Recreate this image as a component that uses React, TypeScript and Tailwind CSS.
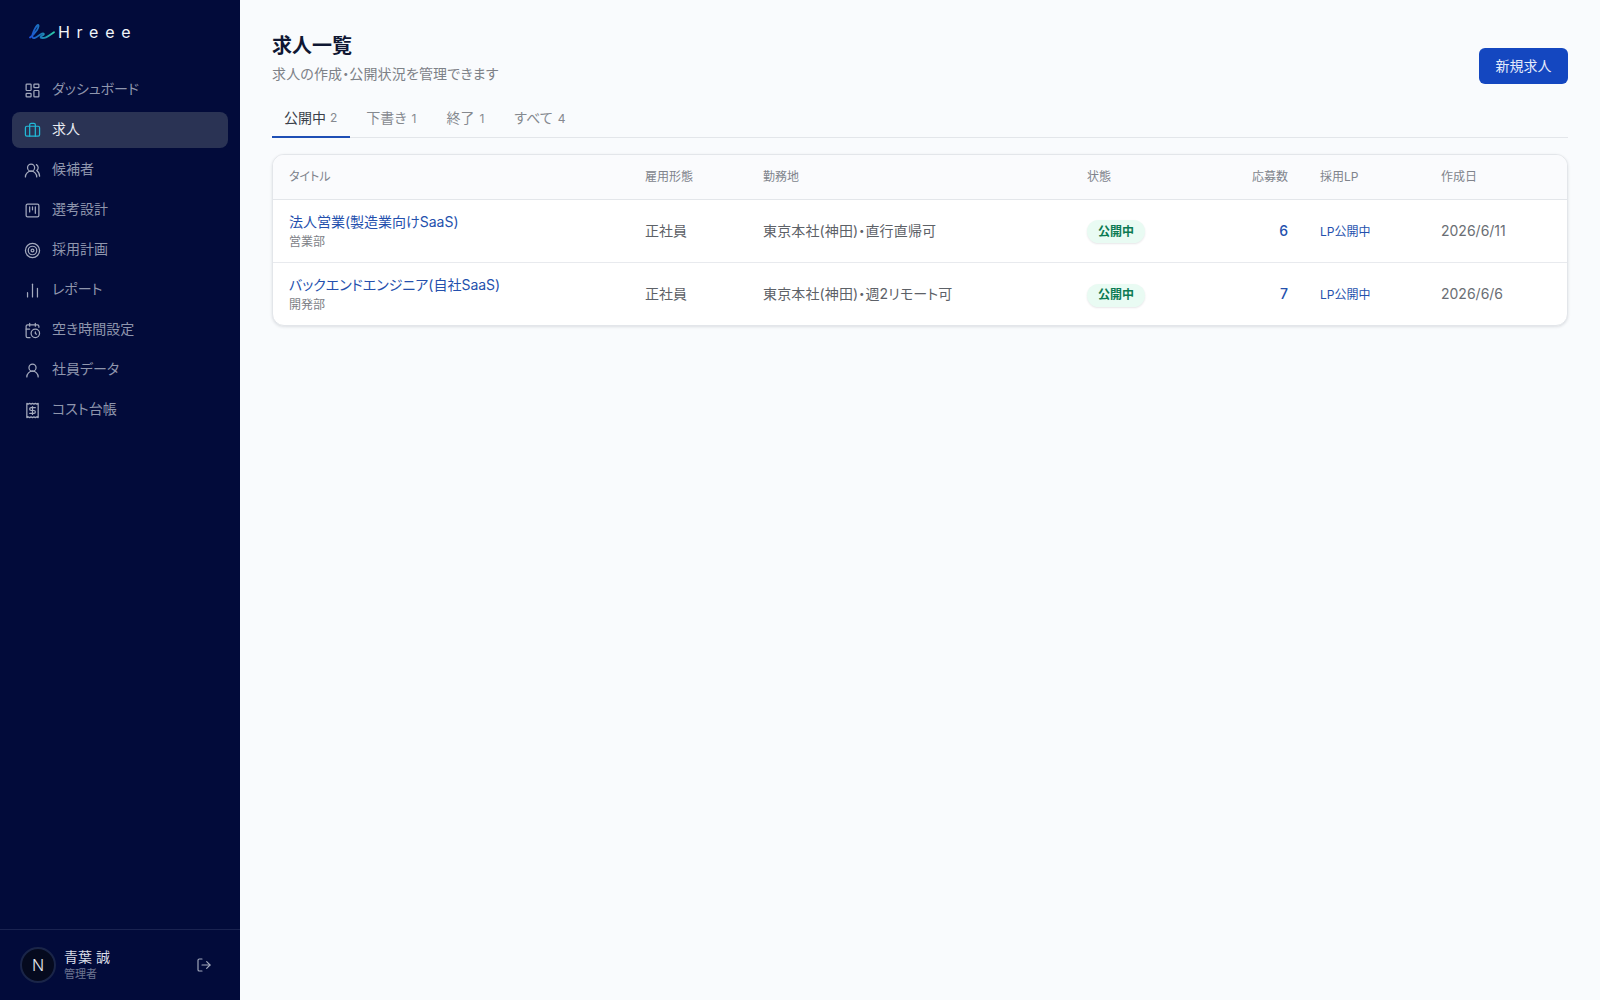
import {
  Briefcase,
  CalendarClock,
  ChartNoAxesColumn,
  LayoutDashboard,
  LogOut,
  Receipt,
  SquareKanban,
  Target,
  UserRound,
  UsersRound,
} from "lucide-react";

const FONT = "font-['Inter','Noto_Sans_CJK_JP',sans-serif] [font-feature-settings:'palt']";

const navItems = [
  { label: "ダッシュボード", icon: LayoutDashboard },
  { label: "求人", icon: Briefcase, active: true },
  { label: "候補者", icon: UsersRound },
  { label: "選考設計", icon: SquareKanban },
  { label: "採用計画", icon: Target },
  { label: "レポート", icon: ChartNoAxesColumn },
  { label: "空き時間設定", icon: CalendarClock },
  { label: "社員データ", icon: UserRound },
  { label: "コスト台帳", icon: Receipt },
];

const tabs = [
  { label: "公開中", count: 2, active: true },
  { label: "下書き", count: 1 },
  { label: "終了", count: 1 },
  { label: "すべて", count: 4 },
];

const jobs = [
  {
    title: "法人営業(製造業向けSaaS)",
    dept: "営業部",
    type: "正社員",
    place: "東京本社(神田)・直行直帰可",
    count: 6,
    created: "2026/6/11",
  },
  {
    title: "バックエンドエンジニア(自社SaaS)",
    dept: "開発部",
    type: "正社員",
    place: "東京本社(神田)・週2リモート可",
    count: 7,
    created: "2026/6/6",
  },
];

function Logo() {
  return (
    <div className="flex items-center pl-[29px] h-[64px]">
      <svg width="26" height="16" viewBox="0 0 26 16" fill="none" className="mr-[3px]">
        <defs>
          <linearGradient id="logo-grad" x1="0" y1="0" x2="26" y2="0" gradientUnits="userSpaceOnUse">
            <stop offset="0" stopColor="#1d4ed8" />
            <stop offset="0.5" stopColor="#1b7fb5" />
            <stop offset="1" stopColor="#2dd4a8" />
          </linearGradient>
        </defs>
        <path
          d="M1 13.500C3 12 6 9 8 6c1.500-2.500 2-5 1-5C7.500 1 4.500 7 3.500 10.500 3 13 3.500 14.500 5.500 14 8 13.500 10 11 12 10c1.500-.8 3-.8 2.800.3-.2 1.200-3.300 1.500-3.300 2.700 0 1.300 3 1.300 5.500.3 3-1.200 5.500-3.300 8-5"
          stroke="url(#logo-grad)"
          strokeWidth="1.800"
          strokeLinecap="round"
        />
      </svg>
      <span className="text-[16px] leading-none text-[#f1f5f9] tracking-[0.42em]">Hreee</span>
    </div>
  );
}

function Sidebar() {
  return (
    <aside className="w-[240px] shrink-0 bg-[#020b3a] flex flex-col">
      <Logo />
      <nav className="flex flex-col gap-1 px-3 pt-[8px]">
        {navItems.map((item) => {
          const Icon = item.icon;
          return (
            <div
              key={item.label}
              className={
                item.active
                  ? "flex items-center h-9 rounded-lg bg-[#2a3354] pl-3 gap-[11px] text-[14px] text-[#e8ebf2]"
                  : "flex items-center h-9 rounded-lg pl-3 gap-[11px] text-[14px] text-[#8f96ad]"
              }
            >
              <Icon
                size={17}
                strokeWidth={1.75}
                className={item.active ? "text-[#22b8d6]" : "text-[#a4aabd]"}
              />
              <span className="pb-[3px]">{item.label}</span>
            </div>
          );
        })}
      </nav>
      <div className="mt-auto h-[71px] border-t border-[#1a2350] flex items-center pl-5 pr-[28px]">
        <div className="w-9 h-9 rounded-full bg-[#050a1e] border-2 border-[#1a2548] flex items-center justify-center text-[16px] font-light text-[#e5e7eb]">
          N
        </div>
        <div className="ml-2 flex flex-col">
          <span className="text-[14px] leading-[18px] text-[#d9dce6]">青葉 誠</span>
          <span className="text-[11px] leading-[16px] text-[#6d7591]">管理者</span>
        </div>
        <LogOut size={16} strokeWidth={1.75} className="ml-auto text-[#a4aabd]" />
      </div>
    </aside>
  );
}

function JobsTable() {
  return (
    <div className="mt-[16px] rounded-xl border border-[#e3e6ea] bg-white shadow-[0_1px_3px_rgba(15,23,42,0.12)] overflow-hidden">
      <table className="w-full table-fixed border-collapse">
        <colgroup>
          <col className="w-[356px]" />
          <col className="w-[118px]" />
          <col className="w-[324px]" />
          <col className="w-[116px]" />
          <col className="w-[117px]" />
          <col className="w-[121px]" />
          <col />
        </colgroup>
        <thead>
          <tr className="h-[44px] bg-[#fafbfd] text-left text-[12px] text-[#80848c] border-b border-[#e3e6ea]">
            <th className="font-normal pl-4">タイトル</th>
            <th className="font-normal pl-4">雇用形態</th>
            <th className="font-normal pl-4">勤務地</th>
            <th className="font-normal pl-4">状態</th>
            <th className="font-normal pr-4 text-right">応募数</th>
            <th className="font-normal pl-4">採用LP</th>
            <th className="font-normal pl-4">作成日</th>
          </tr>
        </thead>
        <tbody>
          {jobs.map((job, i) => (
            <tr key={job.title} className={i === 0 ? "h-[63px] border-b border-[#e8eaee]" : "h-[63px]"}>
              <td className="pl-4 pt-[2px]">
                <div className="text-[14px] leading-[20px] font-normal text-[#2450ad]">{job.title}</div>
                <div className="text-[12px] leading-[18px] mt-[1px] text-[#7d8187]">{job.dept}</div>
              </td>
              <td className="pl-4 text-[14px] text-[#5d6167]">{job.type}</td>
              <td className="pl-4 text-[14px] tracking-[0.01em] text-[#5d6167]">{job.place}</td>
              <td className="pl-4">
                <span className="inline-flex items-center h-[23px] px-[11px] rounded-full bg-[#e9fbf3] text-[12px] font-semibold text-[#0c7a52] shadow-[0_1px_2px_rgba(15,23,42,0.1)]">
                  公開中
                </span>
              </td>
              <td className="pr-4 text-right text-[14px] font-medium text-[#2450ad]">{job.count}</td>
              <td className="pl-4 pt-[2px] text-[12px] text-[#2450ad]">LP公開中</td>
              <td className="pl-4 text-[14px] text-[#6a6e74]">{job.created}</td>
            </tr>
          ))}
        </tbody>
      </table>
    </div>
  );
}

export default function App() {
  return (
    <div className={`${FONT} flex h-[1000px] w-[1600px] overflow-hidden bg-[#f9fbfd]`}>
      <Sidebar />
      <main className="flex-1 pl-8 pr-8 pt-[32px]">
        <div className="flex items-start justify-between">
          <div>
            <h1 className="text-[20px] leading-[28px] font-bold text-[#0f1733]">求人一覧</h1>
            <p className="mt-[4px] text-[14px] leading-[20px] tracking-[0.01em] text-[#7d8187]">
              求人の作成・公開状況を管理できます
            </p>
          </div>
          <button
            type="button"
            className="mt-[16px] h-9 w-[89px] rounded-md bg-[#1447c0] pb-[2px] text-[14px] text-[#e6ecfb]"
          >
            新規求人
          </button>
        </div>
        <div className="mt-[14px] flex border-b border-[#e3e6ea] h-[40px]">
          {tabs.map((tab) => (
            <div
              key={tab.label}
              className={
                tab.active
                  ? "pl-3 pr-[13px] flex items-center gap-[4px] border-b-2 border-[#1e4fb5] -mb-px text-[14px] text-[#3a3f4a]"
                  : "px-[16px] flex items-center gap-[5px] text-[14px] text-[#85898f] -mr-[2px]"
              }
            >
              {tab.label}
              <span className="pt-[2px] text-[12px] text-[#85898f]">{tab.count}</span>
            </div>
          ))}
        </div>
        <JobsTable />
      </main>
    </div>
  );
}
